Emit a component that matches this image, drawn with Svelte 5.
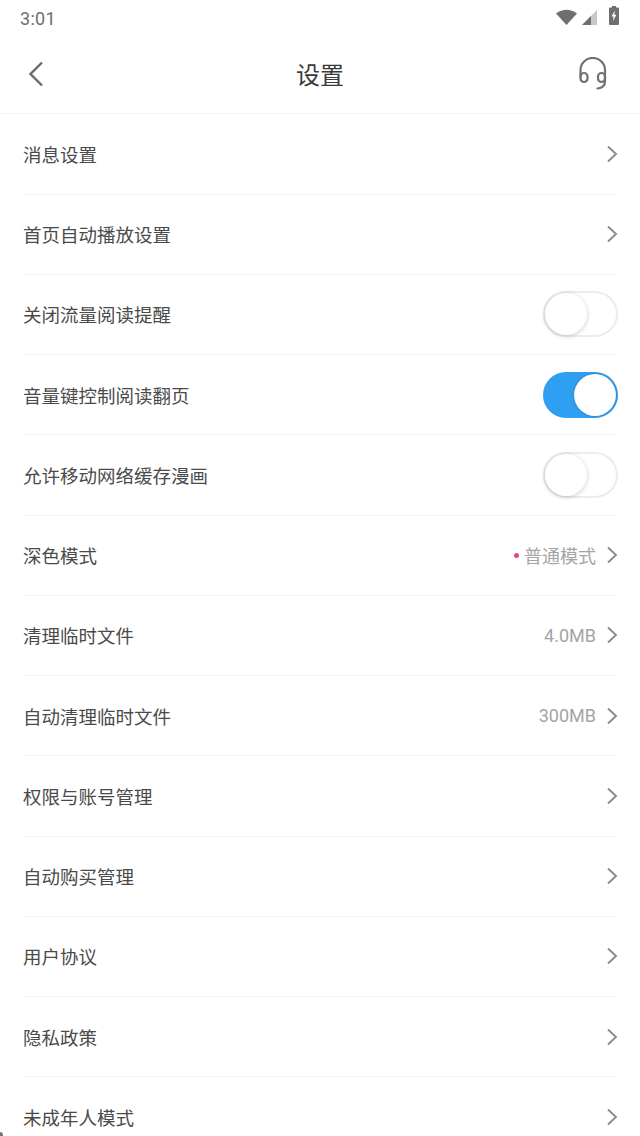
<script>
  const rows = [
    { label: '消息设置' },
    { label: '首页自动播放设置' },
    { label: '关闭流量阅读提醒', toggle: 'off' },
    { label: '音量键控制阅读翻页', toggle: 'on' },
    { label: '允许移动网络缓存漫画', toggle: 'off' },
    { label: '深色模式', value: '普通模式', dot: true },
    { label: '清理临时文件', value: '4.0MB' },
    { label: '自动清理临时文件', value: '300MB' },
    { label: '权限与账号管理' },
    { label: '自动购买管理' },
    { label: '用户协议' },
    { label: '隐私政策' },
    { label: '未成年人模式' }
  ];
</script>

<div class="page">
  <div class="status">
    <span class="time">3:01</span>
    <div class="status-icons">
      <svg width="21" height="16" viewBox="0 0 21 16"><path d="M0 4.5 Q10.5 -3 21 4.5 L10.5 16 Z" fill="#6f6f6f" /></svg>
      <svg class="signal" width="15" height="15" viewBox="0 0 15 15"><path d="M0 15 L15 0 V15 Z" fill="#c9c9c9" /><path d="M0 15 L9 6 V15 Z" fill="#6f6f6f" /></svg>
      <svg class="battery" width="10" height="19" viewBox="0 0 10 19"><path d="M3 0 H7 V1.5 H9 Q10 1.5 10 2.5 V18 Q10 19 9 19 H1 Q0 19 0 18 V2.5 Q0 1.5 1 1.5 H3 Z" fill="#6f6f6f" /><path d="M5.8 4.5 L2.6 10.5 H4.6 L4 15 L7.4 8.7 H5.3 Z" fill="#fff" /></svg>
    </div>
  </div>

  <header class="nav">
    <svg class="back" width="18" height="28" viewBox="0 0 18 28"><path d="M15 2.5 L3.5 14 L15 25.5" fill="none" stroke="#6a6a6a" stroke-width="2.4" /></svg>
    <h1>设置</h1>
    <svg class="service" width="28" height="33" viewBox="0 0 28 33" fill="none" stroke="#707078" stroke-width="2.2" stroke-linecap="round">
      <path d="M1.5 20 V13 A12.2 12 0 0 1 26 13 V24" />
      <rect x="1.5" y="16" width="7" height="9" rx="3.5" />
      <rect x="19" y="16" width="7" height="9" rx="3.5" />
      <path d="M26 24 Q26 31 18.5 31.5" />
    </svg>
  </header>

  <div class="list">
    {#each rows as row}
      <div class="row">
        <span class="label">{row.label}</span>
        {#if row.toggle}
          <span class="toggle" class:on={row.toggle === 'on'}><span class="knob"></span></span>
        {:else}
          <div class="right">
            {#if row.dot}<span class="dot"></span>{/if}
            {#if row.value}<span class="value">{row.value}</span>{/if}
            <svg width="12" height="18" viewBox="0 0 12 18"><path d="M2 1.5 L10 9 L2 16.5" fill="none" stroke="#8a8a8a" stroke-width="1.9" /></svg>
          </div>
        {/if}
      </div>
    {/each}
  </div>

  <span class="corner"></span>
</div>

<style>
  :global(body) {
    margin: 0;
    background: #fff;
  }

  .page {
    position: relative;
    width: 640px;
    height: 1136px;
    overflow: hidden;
    background: #fff;
    font-family: "Roboto", "Noto Sans CJK SC", sans-serif;
  }

  .status {
    height: 36px;
    display: flex;
    align-items: center;
    justify-content: space-between;
    padding: 0 21px 0 20px;
  }

  .time {
    font-size: 18px;
    color: #6e6e6e;
    letter-spacing: 0.3px;
  }

  .status-icons {
    display: flex;
    align-items: flex-end;
    height: 19px;
    margin-top: -5px;
  }

  .signal {
    margin-left: 5px;
  }

  .battery {
    margin-left: 12px;
  }

  .nav {
    height: 78.3px;
    box-sizing: border-box;
    display: grid;
    grid-template-columns: 1fr auto 1fr;
    align-items: center;
    padding: 0 33px 2px;
    border-bottom: 1px solid #f3f3f3;
  }

  .back {
    margin-left: -6px;
  }

  .service {
    justify-self: end;
  }

  .nav h1 {
    margin: 0;
    font-size: 24px;
    font-weight: 400;
    color: #3a3a3a;
  }

  .list {
    padding: 0 24px 0 23px;
  }

  .row {
    height: 80.25px;
    box-sizing: border-box;
    display: flex;
    align-items: center;
    justify-content: space-between;
    border-bottom: 1px solid #f4f4f4;
  }

  .label {
    font-size: 18.5px;
    color: #4a4a4a;
  }

  .right {
    display: flex;
    align-items: center;
    margin-right: -2px;
  }

  .value {
    font-size: 18px;
    color: #a4a4a4;
    margin-right: 10px;
  }

  .dot {
    width: 5px;
    height: 5px;
    border-radius: 50%;
    background: #e8477c;
    margin-right: 5px;
  }

  .toggle {
    width: 75px;
    height: 46px;
    box-sizing: border-box;
    border-radius: 23px;
    border: 2px solid #ececec;
    background: #fff;
    display: flex;
    align-items: center;
    margin-right: -2px;
  }

  .knob {
    width: 42px;
    height: 42px;
    border-radius: 50%;
    background: #fff;
    box-shadow: 0 1px 5px rgba(0, 0, 0, 0.2);
  }

  .toggle.on {
    background: #2f9ff2;
    border-color: #2f9ff2;
    justify-content: flex-end;
  }

  .toggle.on .knob {
    box-shadow: 0 0 2px rgba(20, 70, 120, 0.6);
  }

  .corner {
    position: absolute;
    left: 0;
    bottom: 0;
    width: 3px;
    height: 4px;
    background: #777;
    border-top-right-radius: 3px;
  }
</style>
